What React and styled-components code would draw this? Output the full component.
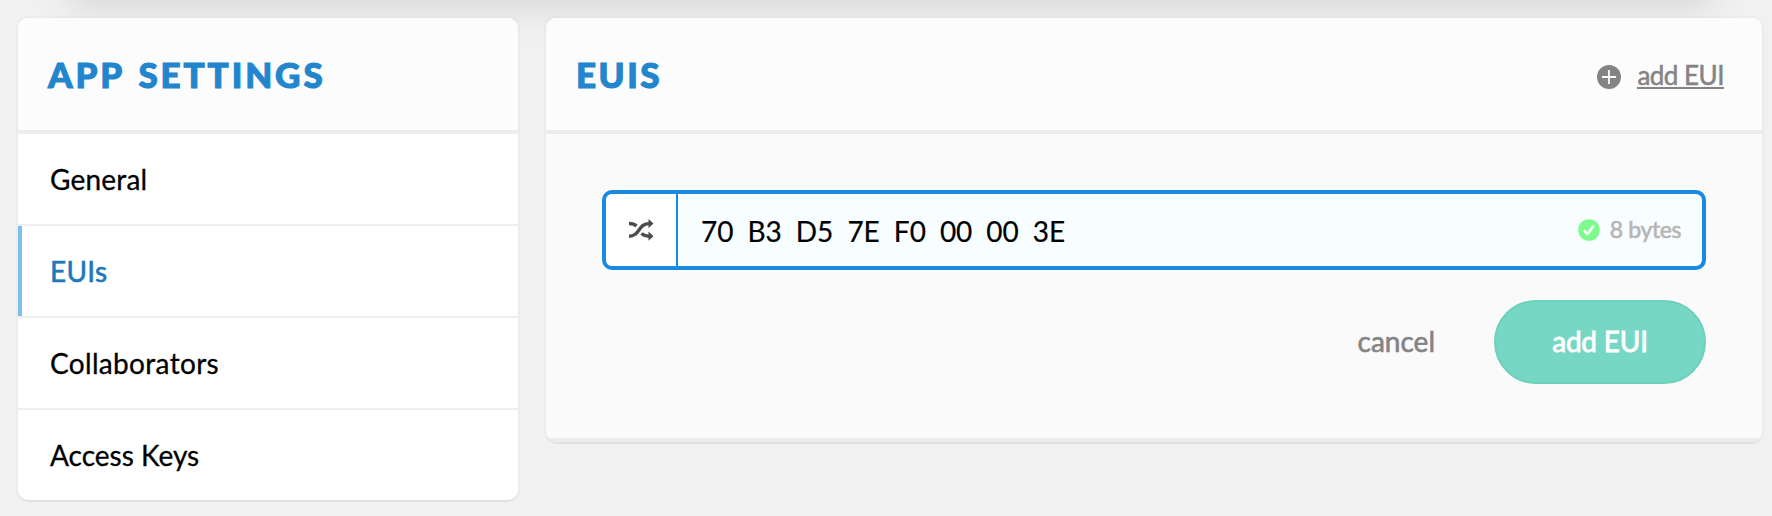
import React from 'react';
import styled, { createGlobalStyle } from 'styled-components';

const GlobalStyle = createGlobalStyle`
  *, *::before, *::after { box-sizing: border-box; }
  body {
    margin: 0;
    background: #f1f1f1;
    font-family: Lato, "Liberation Sans", sans-serif;
    font-size: 28px;
    color: #000;
    overflow: hidden;
  }
`;

const Page = styled.main`
  position: relative;
  display: flex;
  align-items: flex-start;
  gap: 28px;
  height: 516px;
  padding: 18px 10px 0 18px;
  overflow: hidden;
`;

const TopShade = styled.div`
  position: absolute;
  top: -60px;
  left: 70px;
  right: 60px;
  height: 60px;
  box-shadow: 0 4px 40px rgba(0, 0, 0, 0.13);
`;

const Card = styled.section`
  position: relative;
  width: ${(p) => p.$width || 'auto'};
  flex: ${(p) => (p.$width ? 'none' : '1')};
  border-radius: 10px;
  background: ${(p) => p.$bg};
  box-shadow: 0 2px 0 rgba(0, 0, 0, 0.04), 0 0 0 2px rgba(0, 0, 0, 0.02);
  overflow: hidden;
`;

const CardHeader = styled.header`
  display: flex;
  align-items: center;
  justify-content: space-between;
  height: 116px;
  padding: 2px 38px 0 30px;
  background: #fcfcfc;
  border-bottom: 4px solid #ededed;
`;

const Title = styled.h2`
  margin: 0 0 2px;
  color: #2386cd;
  font-size: 35px;
  line-height: 44px;
  font-weight: 900;
  letter-spacing: ${(p) => p.$spacing};
  word-spacing: 3px;
  text-transform: uppercase;
  white-space: nowrap;
  -webkit-text-stroke: 1.1px currentColor;
`;

const Nav = styled.nav`
  display: flex;
  flex-direction: column;
`;

const NavItem = styled.a`
  display: flex;
  align-items: center;
  height: ${(p) => (p.$last ? 90 : 92)}px;
  padding: 0 28px 0 32px;
  border-bottom: ${(p) => (p.$last ? 'none' : '2px solid #eee')};
  box-shadow: ${(p) => (p.$active ? 'inset 4px 0 0 #7dc0eb' : 'none')};
  color: ${(p) => (p.$active ? '#2079b9' : '#000')};
  letter-spacing: ${(p) => p.$tracking}px;
  -webkit-text-stroke: ${(p) => (p.$active ? 0.6 : 0.3)}px currentColor;
`;

const HeaderLink = styled.a`
  display: flex;
  align-items: center;
  gap: 16px;
  color: #848484;
  font-size: 26px;
  line-height: 32px;
  -webkit-text-stroke: 0.5px currentColor;

  svg { margin-top: 3px; }
`;

const LinkLabel = styled.span`
  border-bottom: 2px solid currentColor;
  line-height: 26px;
  height: 27px;
  white-space: nowrap;
  letter-spacing: -0.5px;
`;

const Body = styled.form`
  display: flex;
  flex-direction: column;
  gap: 30px;
  height: 308px;
  padding: 56px 56px 0;
  border-bottom: 4px solid #ececec;
`;

const Field = styled.div`
  display: flex;
  height: 80px;
  border: 4px solid #198ae1;
  border-radius: 10px;
  background: #f8fdff;
  overflow: hidden;
`;

const Randomize = styled.span`
  display: flex;
  align-items: center;
  justify-content: center;
  width: 72px;
  border-right: 2px solid #198ae1;
  background: #fff;
`;

const Bytes = styled.div`
  display: flex;
  flex: 1;
  align-items: center;
  gap: 14px;
  padding: 2px 0 0 23px;
  -webkit-text-stroke: 0.2px currentColor;
`;

const Status = styled.div`
  display: flex;
  align-items: center;
  gap: 10px;
  padding-right: 21px;
  color: #b5b5b5;
  font-size: 23px;
  letter-spacing: -0.4px;
  -webkit-text-stroke: 0.6px currentColor;
`;

const StatusLabel = styled.span`
  padding-bottom: 2px;
`;

const Actions = styled.div`
  display: flex;
  align-items: center;
  justify-content: flex-end;
  gap: 59px;
`;

const Cancel = styled.span`
  padding-bottom: 2px;
  color: #848484;
  -webkit-text-stroke: 0.6px currentColor;
`;

const Submit = styled.span`
  display: flex;
  align-items: center;
  justify-content: center;
  width: 212px;
  height: 84px;
  padding-bottom: 2px;
  border: 2px solid #6bd0bc;
  border-radius: 42px;
  background: #76d7c4;
  color: #fff;
  letter-spacing: -0.2px;
  -webkit-text-stroke: 0.8px currentColor;
`;

const PlusIcon = () => (
  <svg width="24" height="24" viewBox="0 0 24 24">
    <circle cx="12" cy="12" r="12" fill="#848484" />
    <path d="M12 5v14M5 12h14" stroke="#fcfcfc" strokeWidth="1.8" />
  </svg>
);

const CheckIcon = () => (
  <svg width="22" height="22" viewBox="0 0 22 22">
    <circle cx="11" cy="11" r="10.8" fill="#7dfc8d" />
    <path d="M5.800 11.300l3.700 3.700 6.200-8.200" fill="none" stroke="#fff" strokeWidth="2.6" />
  </svg>
);

const ShuffleIcon = () => (
  <svg width="26" height="22" viewBox="0 0 26 22">
    <g fill="none" stroke="#4d4d4d" strokeWidth="3.4">
      <path d="M1 4.500C4.500 4.500 6.500 5 8.500 7" />
      <path d="M1 17.200C12 17.200 10 4.600 21 4.600" />
      <path d="M13.500 14.400C15.500 16.400 17.500 17.200 21 17.200" />
    </g>
    <path d="M20.500 0l5 4.600-5 4.600zM20.500 12.600l5 4.600-5 4.600z" fill="#4d4d4d" />
  </svg>
);

const sections = [
  { name: 'General', tracking: 0.2 },
  { name: 'EUIs', tracking: 0.3 },
  { name: 'Collaborators', tracking: 0.33 },
  { name: 'Access Keys', tracking: 0 },
];
const eui = ['70', 'B3', 'D5', '7E', 'F0', '00', '00', '3E'];

export default function App() {
  return (
    <>
      <GlobalStyle />
      <Page>
        <TopShade />
        <Card $width="500px" $bg="#fff">
          <CardHeader>
            <Title $spacing="2.9px">App Settings</Title>
          </CardHeader>
          <Nav>
            {sections.map(({ name, tracking }, i) => (
              <NavItem
                key={name}
                $active={name === 'EUIs'}
                $tracking={tracking}
                $last={i === sections.length - 1}
              >
                {name}
              </NavItem>
            ))}
          </Nav>
        </Card>
        <Card $bg="#fafafa">
          <CardHeader>
            <Title $spacing="2.5px">EUIs</Title>
            <HeaderLink>
              <PlusIcon />
              <LinkLabel>add EUI</LinkLabel>
            </HeaderLink>
          </CardHeader>
          <Body>
            <Field>
              <Randomize>
                <ShuffleIcon />
              </Randomize>
              <Bytes>
                {eui.map((byte, i) => (
                  <span key={i}>{byte}</span>
                ))}
              </Bytes>
              <Status>
                <CheckIcon />
                <StatusLabel>8 bytes</StatusLabel>
              </Status>
            </Field>
            <Actions>
              <Cancel>cancel</Cancel>
              <Submit>add EUI</Submit>
            </Actions>
          </Body>
        </Card>
      </Page>
    </>
  );
}
